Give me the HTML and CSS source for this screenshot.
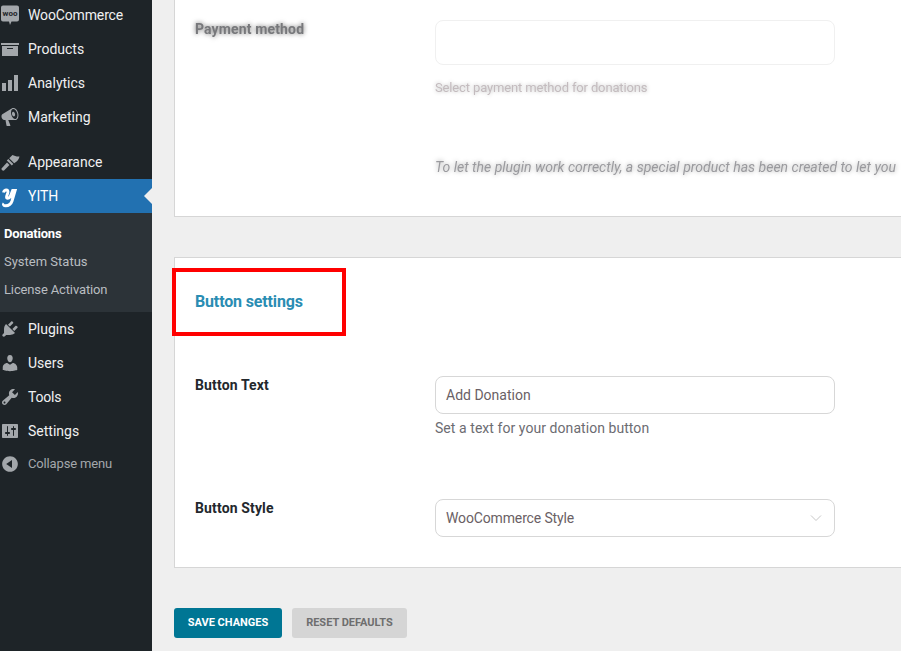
FILE: index.html
```html
<!DOCTYPE html>
<html lang="en">
<head>
<meta charset="utf-8">
<title>YITH Donations settings</title>
<link rel="stylesheet" href="styles.css">
</head>
<body>
<div class="page">
  <nav class="sidebar">
    <ul class="menu">
      <li class="item"><svg class="icon" viewBox="0 0 20 20"><path d="M3 .5h14a2 2 0 0 1 2 2v12a2 2 0 0 1-2 2h-5.500L10 20l-1-3.500H3a2 2 0 0 1-2-2v-12a2 2 0 0 1 2-2z"/><text class="woo-mark" x="10" y="11" text-anchor="middle">woo</text></svg><span class="tight">WooCommerce</span></li>
      <li class="item"><svg class="icon" viewBox="0 0 20 20"><path d="M19 4v2H1V4h18zM2 7h16v10H2V7zm11 3V9H7v1h6z"/></svg><span>Products</span></li>
      <li class="item"><svg class="icon" viewBox="0 0 20 20"><path d="M18 18V2h-4v16h4zm-6 0V7H8v11h4zm-6 0v-8H2v8h4z"/></svg><span>Analytics</span></li>
      <li class="item item-last"><svg class="icon" viewBox="0 0 20 20"><path d="M18.150 5.940c.46 1.620.38 3.220-.02 4.480-.42 1.280-1.260 2.180-2.300 2.480-.16.06-.26.06-.4.06-.06.02-.12.02-.18.02-.06.02-.14.02-.22.02h-6.800l2.220 5.500c.02.14-.06.26-.14.34-.08.1-.24.16-.34.16H6.950c-.1 0-.26-.06-.34-.16-.08-.08-.16-.2-.14-.34l-1-5.500H4.250l-.02-.02c-.5.06-1.080-.18-1.540-.62s-.88-1.080-1.060-1.880c-.24-.8-.2-1.560-.02-2.200.18-.62.58-1.080 1.060-1.300l.02-.02 9-5.400c.1-.06.18-.1.24-.16.06-.04.14-.08.24-.12.16-.08.28-.12.5-.18 1.040-.3 2.240.1 3.220 1 .98.88 1.840 2.240 2.260 3.860zm-2.580 5.980h-.02c.4-.1.74-.34 1.040-.7.58-.7.86-1.760.86-3.040-.02-.64-.1-1.300-.28-1.980-.34-1.360-1.020-2.500-1.780-3.240s-1.680-1.100-2.460-.88c-.82.22-1.400.96-1.700 2-.32 1.040-.28 2.360.06 3.720.38 1.360 1 2.500 1.800 3.240.78.74 1.620 1.100 2.480.88zm-2.540-7.080c.22-.04.42-.02.62.04.38.16.76.48 1.020 1s.42 1.200.42 1.780c0 .3-.04.56-.12.8-.18.48-.44.84-.86.94-.34.1-.8-.06-1.140-.4-.4-.3-.74-.86-.9-1.500-.16-.66-.1-1.240.04-1.740.14-.46.46-.8.92-.92z"/></svg><span>Marketing</span></li>
      <li class="item"><svg class="icon" viewBox="0 0 20 20"><path d="M1.500 16.500L7 10.500l2.500 2.500-5.500 5.500c-1 .6-3-1-2.500-2z"/><path d="M6.800 8.600l1.500-1.500 5 5-1.500 1.500z"/><path d="M9.200 6.300L12.500 3c1.800 1 4.200 1.700 7 1.500-.6 2.800-2 5-5.300 6.800z"/></svg><span>Appearance</span></li>
      <li class="item item-active"><svg class="icon yith-mark" viewBox="0 0 20 20"><path d="M3.500 6.500C4 4 6.500 3.200 7.800 4.800c1 1.500-1.200 4.200-1.200 6.200 0 1.500 2 1.500 3.500 0l2.600-6.500h2.400L12 15c-1 3-3.500 4.800-6.300 4.800-1.800 0-2.800-1.300-1.800-2.300"/></svg><span>YITH</span><i class="arrow"></i></li>
      <li class="submenu">
        <a class="sub sub-current">Donations</a>
        <a class="sub">System Status</a>
        <a class="sub tight">License Activation</a>
      </li>
      <li class="item"><svg class="icon" viewBox="0 0 20 20"><path d="M13.110 4.360L9.870 7.600 8 5.730l3.240-3.240c.35-.34 1.050-.2 1.560.32.52.51.66 1.210.31 1.550zm-8 1.770l.91-1.120 9.010 9.010-1.190.84c-.71.71-2.630 1.160-3.820 1.160H6.140L4.900 17.260c-.59.59-1.540.59-2.120 0-.59-.58-.59-1.530 0-2.120l1.240-1.240v-3.880c0-1.130.4-3.190 1.090-3.890zm7.260 3.970l3.240-3.240c.34-.35 1.040-.21 1.550.31.52.51.66 1.210.31 1.550l-3.240 3.250z"/></svg><span>Plugins</span></li>
      <li class="item"><svg class="icon" viewBox="0 0 20 20"><path d="M10 9.250c-2.270 0-2.730-3.440-2.730-3.440C7 4.020 7.820 2 9.970 2c2.160 0 2.980 2.020 2.710 3.810 0 0-.41 3.440-2.680 3.440zm0 2.570L12.720 10c2.390 0 4.520 2.330 4.520 4.530v2.490s-3.650 1.130-7.240 1.130c-3.650 0-7.240-1.130-7.240-1.130v-2.490c0-2.250 1.940-4.480 4.470-4.480z"/></svg><span>Users</span></li>
      <li class="item"><svg class="icon" viewBox="0 0 20 20"><path d="M16.680 9.770c-1.340 1.340-3.300 1.670-4.950.99l-5.410 6.520c-.99.99-2.590.99-3.580 0s-.99-2.590 0-3.570l6.520-5.420c-.68-1.650-.35-3.610.99-4.950 1.280-1.280 3.120-1.620 4.720-1.060l-2.890 2.890 2.820 2.820 2.860-2.870c.53 1.580.18 3.390-1.080 4.650zM3.810 16.210c.4.39 1.040.39 1.430 0 .4-.4.4-1.040 0-1.430-.39-.4-1.030-.4-1.430 0-.39.39-.39 1.030 0 1.430z"/></svg><span class="tight-sm">Tools</span></li>
      <li class="item"><svg class="icon" viewBox="0 0 20 20"><path d="M18 16V4c0-.55-.45-1-1-1H3c-.55 0-1 .45-1 1v12c0 .55.45 1 1 1h14c.55 0 1-.45 1-1zM8 11h1c.55 0 1 .45 1 1s-.45 1-1 1H8v1.500c0 .28-.22.5-.5.5s-.5-.22-.5-.5V13H6c-.55 0-1-.45-1-1s.45-1 1-1h1V5.500c0-.28.22-.5.5-.5s.5.22.5.5V11zm5-2h-1c-.55 0-1-.45-1-1s.45-1 1-1h1V5.500c0-.28.22-.5.5-.5s.5.22.5.5V7h1c.55 0 1 .45 1 1s-.45 1-1 1h-1v5.500c0 .28-.22.5-.5.5s-.5-.22-.5-.5V9z"/></svg><span>Settings</span></li>
      <li class="item item-collapse"><svg class="icon" viewBox="0 0 20 20"><path d="M10 2.160c4.330 0 7.840 3.510 7.840 7.840s-3.510 7.840-7.840 7.840S2.160 14.330 2.160 10 5.710 2.160 10 2.160zm2 11.720V6.120L6.180 9.970z"/></svg><span class="collapse-label">Collapse menu</span></li>
    </ul>
  </nav>
  <main class="main">
    <section class="card card-top">
      <div class="row row-faded">
        <div class="label label-blur">Payment method</div>
        <div class="field">
          <div class="box box-faint"></div>
          <p class="hint hint-blur">Select payment method for donations</p>
        </div>
      </div>
      <p class="note">To let the plugin work correctly, a special product has been created to let you</p>
    </section>
    <section class="card card-bottom">
      <h2 class="title">Button settings</h2>
      <div class="mark"></div>
      <div class="row row-text">
        <div class="label">Button Text</div>
        <div class="field">
          <div class="box">Add Donation</div>
          <p class="hint">Set a text for your donation button</p>
        </div>
      </div>
      <div class="row row-style">
        <div class="label">Button Style</div>
        <div class="field">
          <div class="box box-select"><span class="tight">WooCommerce Style</span>
            <svg class="chevron" viewBox="0 0 12 8"><path d="M1 1.500l5 5 5-5"/></svg>
          </div>
        </div>
      </div>
    </section>
    <div class="actions">
      <button class="btn btn-save">SAVE CHANGES</button>
      <button class="btn btn-reset">RESET DEFAULTS</button>
    </div>
  </main>
</div>
</body>
</html>
```
FILE: styles.css
```css
* { box-sizing: border-box; }
html, body { margin: 0; height: 100%; overflow: hidden; }
body { font-family: Roboto, "Liberation Sans", sans-serif; background: #efefef; }
.page { display: flex; width: 901px; height: 651px; overflow: hidden; }

.sidebar { flex: 0 0 152px; background: #1e2428; color: #f0f0f1; font-size: 14px; }
.menu { list-style: none; margin: -2px 0 0; padding: 0; }
.item { position: relative; display: flex; align-items: center; height: 34px; gap: 8px; }
.item-last { margin-bottom: 11px; }
.icon { width: 20px; height: 20px; fill: #a3a7ab; flex: none; overflow: visible; }
.woo-mark { font-family: Roboto, sans-serif; font-size: 8px; font-weight: 700; fill: #1e2428; }
.item-active { background: #2271b1; color: #fff; }
.yith-mark { fill: none; stroke: #fff; stroke-width: 3; }
.arrow { position: absolute; right: 0; top: 9px; width: 0; height: 0; border: 8px solid transparent; border-left-width: 0; border-right-color: #efefef; }
.submenu { display: flex; flex-direction: column; height: 99px; padding-top: 7px; background: #2c3338; font-size: 13px; }
.sub { height: 28px; line-height: 28px; padding-left: 4px; color: #b9bdc1; }
.sub-current { color: #fff; font-weight: 700; letter-spacing: -.2px; }
.tight { letter-spacing: -.14px; }
.tight-sm { letter-spacing: -.2px; }
.item-collapse { height: 32px; font-size: 13px; color: #a3a7ab; }
.collapse-label { margin-bottom: 2px; letter-spacing: -.15px; }

.main { flex: 1; min-width: 0; padding-left: 22px; overflow: hidden; }
.card { position: relative; width: 800px; background: #fff; border: 1px solid #d6d6d6; border-right: 0; padding-left: 20px; }
.card-top { height: 217px; margin-bottom: 40px; border-top: 0; padding-top: 19px; }
.card-bottom { height: 311px; padding-top: 34px; }

.row { display: grid; grid-template-columns: 240px 400px; }
.label { font-size: 14px; font-weight: 700; line-height: 20px; color: #23282d; letter-spacing: .14px; }
.label-blur { color: #77787b; text-shadow: 0 0 5px rgba(0, 0, 0, .6); filter: blur(.3px); }
.box { height: 38px; line-height: 36px; padding: 0 10px; font-size: 14px; color: #6a5f65; background: #fff; border: 1px solid #d7d7d7; border-radius: 8px; margin-top: 1px; }
.box-faint { height: 45px; border-color: #f0f0f0; }
.box-select { position: relative; }
.chevron { position: absolute; right: 12px; top: 14px; width: 12px; height: 8px; fill: none; stroke: #c8c8c8; stroke-width: 1; }
.hint { margin: 4px 0 0; font-size: 14px; line-height: 20px; color: #6c6c72; letter-spacing: .06px; }
.hint-blur { margin-top: 13px; font-size: 13px; letter-spacing: -.14px; color: #c3bbbe; text-shadow: 0 0 4px rgba(0, 0, 0, .3); filter: blur(.2px); }
.note { margin: 59px 0 0 240px; font-size: 14px; font-style: italic; line-height: 20px; letter-spacing: .01px; white-space: nowrap; color: #9a9a9e; text-shadow: 0 0 5px rgba(0, 0, 0, .4); filter: blur(.2px); }

.title { margin: 0; font-size: 16px; font-weight: 700; line-height: 20px; letter-spacing: -.15px; color: #2a8db3; }
.mark { position: absolute; left: -3px; top: 10px; width: 174px; height: 68px; border: 4px solid #ff0000; }
.row-text { margin-top: 63px; }
.row-style { margin-top: 60px; }

.actions { display: flex; gap: 10px; margin-top: 40px; }
.btn { height: 30px; border: 0; border-radius: 3px; font-family: inherit; font-size: 11px; font-weight: 700; padding: 0 0 2px; }
.btn-save { width: 108px; background: #007694; color: #fff; }
.btn-reset { width: 115px; background: #d5d5d5; color: #6e6e6e; }
```
